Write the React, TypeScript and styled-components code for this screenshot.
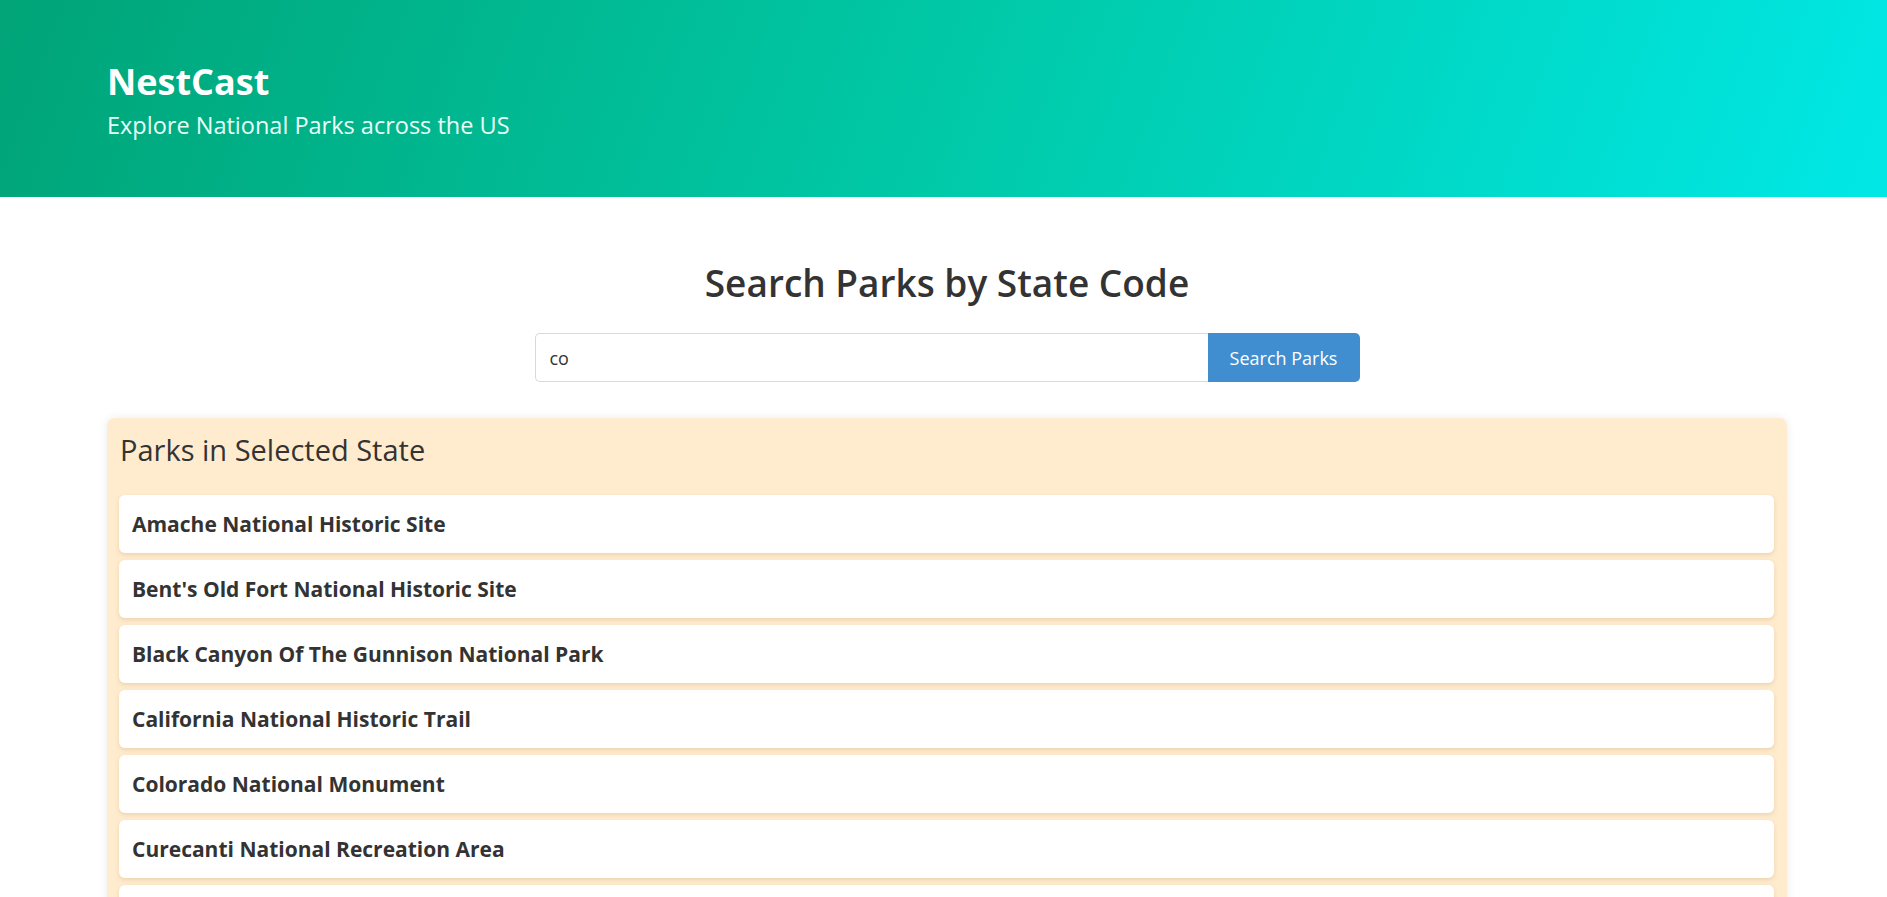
import React, { useState } from "react";
import styled, { createGlobalStyle } from "styled-components";

const GlobalStyle = createGlobalStyle`
    body {
        margin: 0;
        font-family: "Open Sans", "Noto Sans", sans-serif;
        color: #333;
        background: #fff;
    }
`;

const Header = styled.header`
    height: 197px;
    box-sizing: border-box;
    padding: 5px 107px 0;
    display: flex;
    flex-direction: column;
    justify-content: center;
    background: linear-gradient(110deg, #00a477 0%, #00c9a7 50%, #00e8e6 100%);
    color: #fff;
`;

const Brand = styled.h1`
    margin: 0 0 5px;
    font-size: 36px;
    font-weight: 700;
    line-height: 1.2;
`;

const Tagline = styled.p`
    margin: 0;
    font-size: 23.5px;
    line-height: 1.4;
    color: #eafff8;
`;

const Main = styled.main`
    padding: 0 100px 40px 107px;
`;

const SearchSection = styled.section`
    display: flex;
    flex-direction: column;
    align-items: center;
    padding-top: 64px;
`;

const SearchTitle = styled.h2`
    margin: 0 0 28px;
    font-size: 37px;
    font-weight: 600;
    line-height: 1.2;
    color: #333;
`;

const SearchForm = styled.form`
    display: flex;
    width: 825px;
`;

const StateInput = styled.input`
    flex: 1;
    height: 49px;
    box-sizing: border-box;
    padding: 0 14px;
    border: 1px solid #d9d9d9;
    border-right: none;
    border-radius: 5px 0 0 5px;
    font-family: inherit;
    font-size: 18px;
    color: #333;
    outline: none;
`;

const SearchButton = styled.button`
    width: 152px;
    height: 49px;
    border: none;
    border-radius: 0 5px 5px 0;
    background: #408ecf;
    color: #fff;
    font-family: inherit;
    font-size: 18px;
    cursor: pointer;
`;

const ResultsPanel = styled.section`
    margin-top: 36px;
    padding: 12px 13px 12px 12px;
    background: #ffebcd;
    border-radius: 8px;
    box-shadow: 0 0 10px rgba(0, 0, 0, 0.08);
`;

const PanelTitle = styled.h3`
    margin: 0;
    padding: 3px 1px 27px;
    font-size: 29px;
    font-weight: 400;
    line-height: 1.2;
    color: #333;
`;

const ParkList = styled.ul`
    list-style: none;
    margin: 0;
    padding: 0;
    display: flex;
    flex-direction: column;
    gap: 7px;
`;

const ParkItem = styled.li`
    height: 58px;
    box-sizing: border-box;
    display: flex;
    align-items: center;
    padding: 0 13px;
    background: #fff;
    border-radius: 6px;
    box-shadow: 0 2px 4px rgba(150, 110, 50, 0.18);
    font-size: 21px;
    font-weight: 700;
    color: #333;
`;

const parks = [
    "Amache National Historic Site",
    "Bent's Old Fort National Historic Site",
    "Black Canyon Of The Gunnison National Park",
    "California National Historic Trail",
    "Colorado National Monument",
    "Curecanti National Recreation Area",
    "Dinosaur National Monument",
    "Florissant Fossil Beds National Monument",
    "Great Sand Dunes National Park & Preserve",
    "Hovenweep National Monument",
    "Mesa Verde National Park",
    "Old Spanish National Historic Trail",
    "Pony Express National Historic Trail",
    "Rocky Mountain National Park",
    "Sand Creek Massacre National Historic Site",
    "Santa Fe National Historic Trail",
    "Yucca House National Monument",
];

export default function App() {
    const [stateCode, setStateCode] = useState("co");

    return (
        <>
            <GlobalStyle/>
            <Header>
                <Brand>NestCast</Brand>
                <Tagline>Explore National Parks across the US</Tagline>
            </Header>
            <Main>
                <SearchSection>
                    <SearchTitle>Search Parks by State Code</SearchTitle>
                    <SearchForm onSubmit={(e) => e.preventDefault()}>
                        <StateInput
                            value={stateCode}
                            onChange={(e) => setStateCode(e.target.value)}
                        />
                        <SearchButton type="submit">Search Parks</SearchButton>
                    </SearchForm>
                </SearchSection>
                <ResultsPanel>
                    <PanelTitle>Parks in Selected State</PanelTitle>
                    <ParkList>
                        {parks.map((name) => (
                            <ParkItem key={name}>{name}</ParkItem>
                        ))}
                    </ParkList>
                </ResultsPanel>
            </Main>
        </>
    );
}
